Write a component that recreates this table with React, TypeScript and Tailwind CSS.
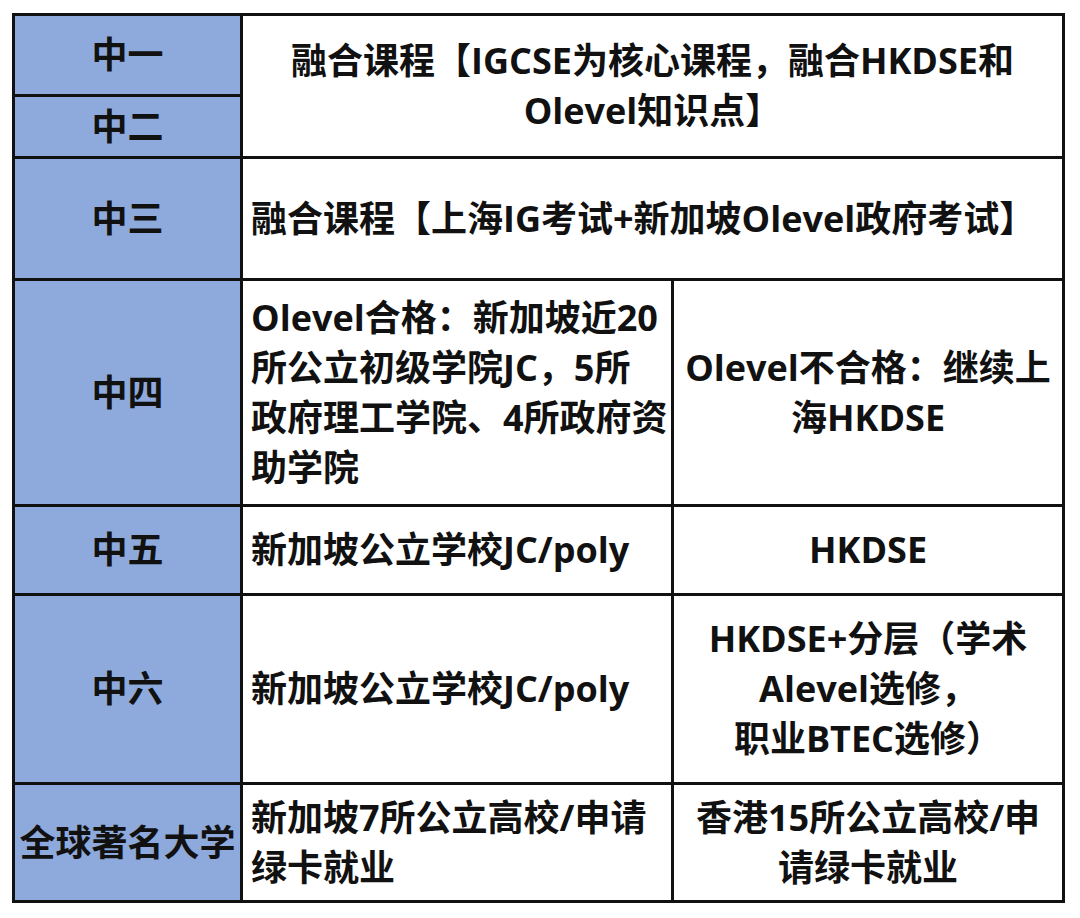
import { type FC, type ReactNode } from "react"

const font = {
  fontFamily: '"Open Sans", "Noto Sans CJK SC", sans-serif',
}

type CellProps = {
  children: ReactNode
  className?: string
}

const HeadCell: FC<CellProps> = ({ children, className = "" }) => (
  <div
    className={`flex items-center justify-center bg-[#8ea9db] text-center ${className}`}
  >
    {children}
  </div>
)

const LeftCell: FC<CellProps> = ({ children, className = "" }) => (
  <div className={`flex items-center bg-white pl-[8px] ${className}`}>
    <div>{children}</div>
  </div>
)

const CenterCell: FC<CellProps> = ({ children, className = "" }) => (
  <div
    className={`flex items-center justify-center bg-white text-center ${className}`}
  >
    <div>{children}</div>
  </div>
)

export default function App() {
  return (
    <div className="min-h-[918px] w-[1080px] bg-white pl-[12px] pt-[13px]">
      <div
        style={font}
        className="grid w-fit grid-cols-[225px_428px_388px] grid-rows-[78px_59px_119px_223px_86px_186px_115px] gap-[3px] bg-[#111] p-[3px] text-[36px] font-bold leading-[50px] text-[#111]"
      >
        <HeadCell>中一</HeadCell>
        <CenterCell className="col-span-2 row-span-2">
          融合课程【IGCSE为核心课程，融合HKDSE和
          <br />
          Olevel知识点】
        </CenterCell>
        <HeadCell>中二</HeadCell>

        <HeadCell>中三</HeadCell>
        <LeftCell className="col-span-2">
          融合课程【上海IG考试+新加坡Olevel政府考试】
        </LeftCell>

        <HeadCell>中四</HeadCell>
        <LeftCell>
          Olevel合格：新加坡近20
          <br />
          所公立初级学院JC，5所
          <br />
          政府理工学院、4所政府资
          <br />
          助学院
        </LeftCell>
        <CenterCell>
          Olevel不合格：继续上
          <br />
          海HKDSE
        </CenterCell>

        <HeadCell>中五</HeadCell>
        <LeftCell>新加坡公立学校JC/poly</LeftCell>
        <CenterCell>HKDSE</CenterCell>

        <HeadCell>中六</HeadCell>
        <LeftCell>新加坡公立学校JC/poly</LeftCell>
        <CenterCell>
          HKDSE+分层（学术
          <br />
          Alevel选修，
          <br />
          职业BTEC选修）
        </CenterCell>

        <HeadCell>全球著名大学</HeadCell>
        <LeftCell>
          新加坡7所公立高校/申请
          <br />
          绿卡就业
        </LeftCell>
        <CenterCell>
          香港15所公立高校/申
          <br />
          请绿卡就业
        </CenterCell>
      </div>
    </div>
  )
}
